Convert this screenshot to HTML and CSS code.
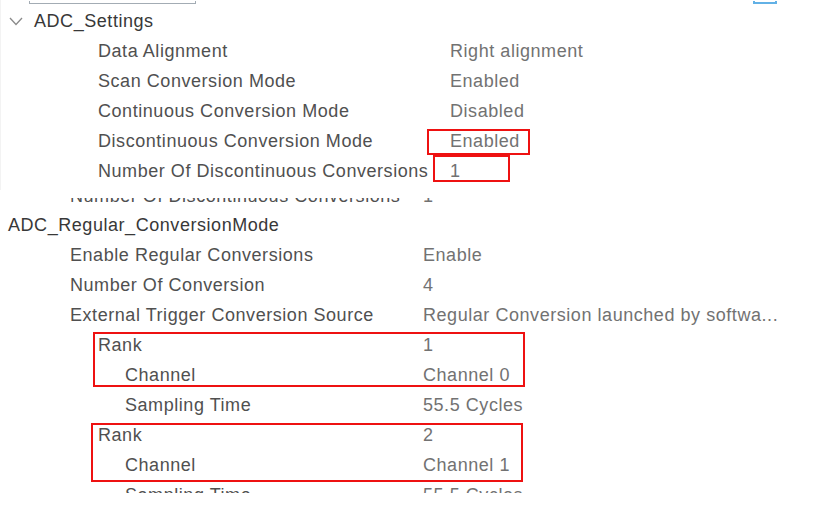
FILE: index.html
```html
<!DOCTYPE html>
<html>
<head>
<meta charset="utf-8">
<link rel="stylesheet" href="styles.css">
</head>
<body>
<div class="page">
  <section class="top">
    <div class="toolbar">
      <div class="search"></div>
      <div class="check"></div>
    </div>
    <div class="group-head">
      <svg class="chev" width="14" height="9" viewBox="0 0 14 9"><polyline points="1,1 7,7.5 13,1" fill="none" stroke="#8a8a8a" stroke-width="1.3"/></svg>
      <span>ADC_Settings</span>
    </div>
    <div class="row r-top"><span class="lbl">Data Alignment</span><span class="val">Right alignment</span></div>
    <div class="row r-top"><span class="lbl">Scan Conversion Mode</span><span class="val">Enabled</span></div>
    <div class="row r-top"><span class="lbl">Continuous Conversion Mode</span><span class="val">Disabled</span></div>
    <div class="row r-top"><span class="lbl">Discontinuous Conversion Mode</span><span class="val">Enabled</span></div>
    <div class="row r-top"><span class="lbl">Number Of Discontinuous Conversions</span><span class="val">1</span></div>
  </section>

  <section class="bottom">
    <div class="fragment">
      <div class="row r-bot frag-row"><span class="lbl l1">Number Of Discontinuous Conversions</span><span class="val">1</span></div>
    </div>
    <div class="group-head plain"><span>ADC_Regular_ConversionMode</span></div>
    <div class="row r-bot"><span class="lbl l1">Enable Regular Conversions</span><span class="val">Enable</span></div>
    <div class="row r-bot"><span class="lbl l1">Number Of Conversion</span><span class="val">4</span></div>
    <div class="row r-bot"><span class="lbl l1">External Trigger Conversion Source</span><span class="val">Regular Conversion launched by softwa...</span></div>
    <div class="row r-bot"><span class="lbl l2">Rank</span><span class="val">1</span></div>
    <div class="row r-bot"><span class="lbl l3">Channel</span><span class="val">Channel 0</span></div>
    <div class="row r-bot"><span class="lbl l3">Sampling Time</span><span class="val">55.5 Cycles</span></div>
    <div class="row r-bot"><span class="lbl l2">Rank</span><span class="val">2</span></div>
    <div class="row r-bot"><span class="lbl l3">Channel</span><span class="val">Channel 1</span></div>
    <div class="row r-bot"><span class="lbl l3">Sampling Time</span><span class="val">55.5 Cycles</span></div>
  </section>

  <div class="mark mark-a"></div>
  <div class="mark mark-b"></div>
  <div class="mark mark-c"></div>
  <div class="mark mark-d"></div>
</div>
</body>
</html>
```

FILE: styles.css
```css
html, body {
  margin: 0;
  padding: 0;
  background: #ffffff;
}

.page {
  position: relative;
  width: 818px;
  height: 512px;
  overflow: hidden;
  font-family: "Liberation Sans", Arial, sans-serif;
  font-size: 18px;
  letter-spacing: 0.55px;
  color: #505050;
}

.top {
  height: 190px;
  overflow: hidden;
  border-left: 1px solid #f3f3f3;
  box-sizing: border-box;
}

.toolbar {
  height: 4px;
  display: flex;
  justify-content: space-between;
  align-items: flex-end;
}

.search {
  margin-left: 28px;
  width: 167px;
  height: 3px;
  border: 1px solid #a3acb4;
  border-top: none;
  box-sizing: border-box;
}

.check {
  margin-right: 41px;
  width: 24px;
  height: 3px;
  border: 2px solid #62b1e6;
  border-top: none;
  box-sizing: border-box;
}

.group-head {
  height: 31px;
  padding-top: 3px;
  box-sizing: border-box;
  display: flex;
  align-items: center;
  color: #383838;
}

.group-head .chev {
  margin-left: 8px;
  margin-right: 11px;
}

.group-head.plain {
  padding-left: 8px;
  height: 30px;
}

.row {
  height: 30px;
  padding-top: 3px;
  box-sizing: border-box;
  display: grid;
  align-items: center;
  white-space: nowrap;
}

.r-top {
  grid-template-columns: 449px 1fr;
}

.r-top .lbl {
  padding-left: 97px;
}

.r-bot {
  grid-template-columns: 423px 1fr;
}

.lbl {
  color: #505050;
}

.val {
  color: #727272;
}

.l1 { padding-left: 70px; }
.l2 { padding-left: 98px; }
.l3 { padding-left: 125px; }

.bottom {
  height: 303px;
  overflow: hidden;
}

.fragment {
  margin-top: 8px;
  margin-bottom: 7px;
  height: 4px;
  overflow: hidden;
}

.frag-row {
  margin-top: -18px;
}

.mark {
  position: absolute;
  border: 2px solid #ee1111;
  box-sizing: border-box;
}

.mark-a { left: 427px; top: 129px; width: 103px; height: 26px; }
.mark-b { left: 433px; top: 155px; width: 77px;  height: 27px; }
.mark-c { left: 93px;  top: 332px; width: 432px; height: 55px; }
.mark-d { left: 91px;  top: 423px; width: 432px; height: 59px; }
```
